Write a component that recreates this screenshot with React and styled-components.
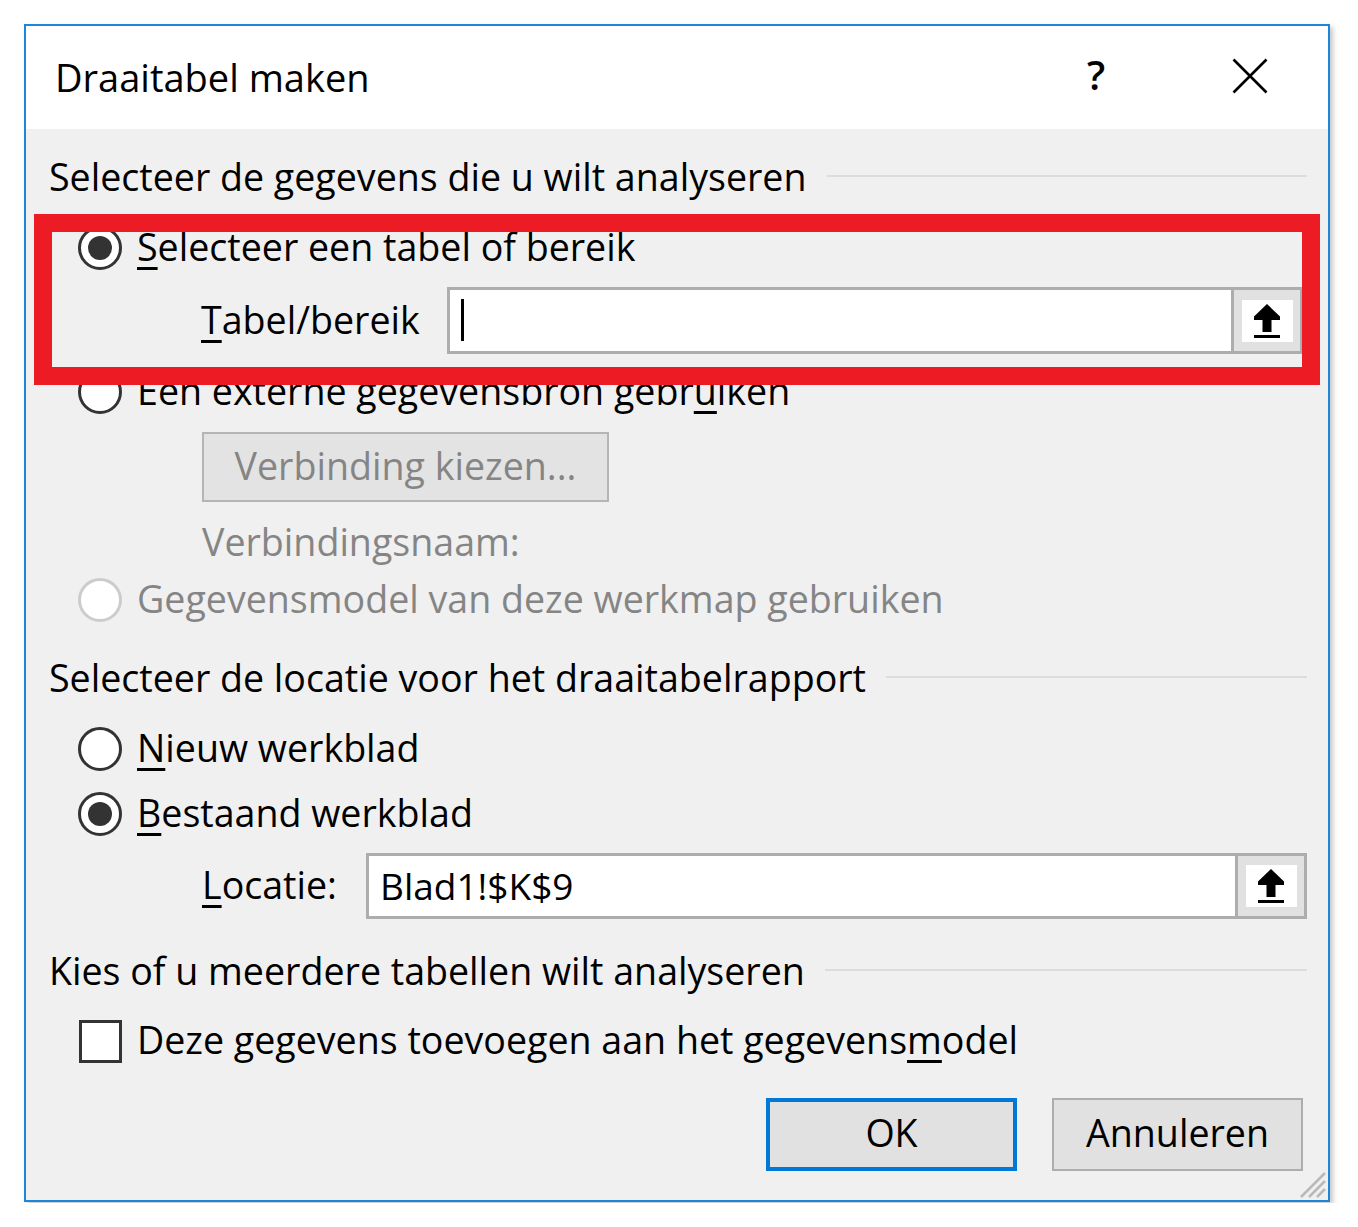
import React from 'react';
import styled, { createGlobalStyle } from 'styled-components';

const GlobalStyle = createGlobalStyle`
  html, body {
    margin: 0;
    padding: 0;
    background: #ffffff;
  }
  body {
    font-family: 'Open Sans', 'Noto Sans', 'DejaVu Sans', sans-serif;
    color: #000;
  }
`;

const Page = styled.div`
  padding: 24px 0 0 24px;
  height: 1203px;
  box-sizing: border-box;
`;

const Dialog = styled.div`
  position: relative;
  width: 1306px;
  height: 1178px;
  box-sizing: border-box;
  border: 2px solid #1e86d9;
  background: #f0f0f0;
  box-shadow: 3px 3px 5px rgba(0, 0, 0, 0.22);
  display: flex;
  flex-direction: column;
`;

const TitleBar = styled.div`
  height: 103px;
  flex-shrink: 0;
  background: #ffffff;
  display: flex;
  align-items: center;
  padding: 0 0 0 29px;
`;

const Title = styled.div`
  flex: 1;
  font-size: 38px;
  padding-bottom: 2px;
`;

const HelpGlyph = styled.div`
  font-size: 40px;
  font-weight: 600;
  width: 40px;
  text-align: center;
  margin-right: 116px;
  padding-bottom: 6px;
`;

const CloseGlyph = styled.svg`
  width: 36px;
  height: 36px;
  margin-right: 60px;
  margin-bottom: 4px;
`;

const Body = styled.div`
  flex: 1;
  padding: 26px 21px 0 23px;
  display: flex;
  flex-direction: column;
`;

const Row = styled.div`
  display: flex;
  align-items: center;
  flex-shrink: 0;
  height: ${p => p.$h || 46}px;
  margin-top: ${p => p.$mt || 0}px;
  padding-left: ${p => p.$indent || 0}px;
  margin-right: ${p => p.$mr || 0}px;
  font-size: 37.6px;
  color: ${p => (p.$disabled ? '#858585' : '#000')};
  white-space: nowrap;
`;

const RowText = styled.span`
  padding-bottom: 3px;
`;

const SectionLine = styled.div`
  flex: 1;
  height: 2px;
  background: #dcdcdc;
  margin-left: 20px;
  margin-top: -4px;
`;

const Radio = styled.span`
  width: 44px;
  height: 44px;
  box-sizing: border-box;
  border-radius: 50%;
  border: 3px solid ${p => (p.$disabled ? '#cccccc' : '#333333')};
  background: #ffffff;
  display: flex;
  align-items: center;
  justify-content: center;
  margin-right: 15px;
  flex-shrink: 0;

  &::after {
    content: '';
    display: ${p => (p.$checked ? 'block' : 'none')};
    width: 24px;
    height: 24px;
    border-radius: 50%;
    background: #333333;
  }
`;

const Check = styled.span`
  width: 43px;
  height: 43px;
  box-sizing: border-box;
  border: 3px solid #333333;
  background: #ffffff;
  margin-right: 15px;
  flex-shrink: 0;
`;

const Acc = styled.span`
  text-decoration: underline;
  text-decoration-thickness: 3px;
  text-underline-offset: 6px;
`;

const FieldLabel = styled.span`
  width: ${p => p.$w}px;
  flex-shrink: 0;
  padding-bottom: 3px;
`;

const FieldGroup = styled.div`
  flex: 1;
  height: 100%;
  box-sizing: border-box;
  border: 3px solid #adadad;
  display: flex;
`;

const Field = styled.div`
  flex: 1;
  background: #ffffff;
  display: flex;
  align-items: center;
  padding-left: 11px;
  padding-bottom: 2px;
  font-size: 37px;
`;

const Caret = styled.span`
  width: 3px;
  height: 42px;
  background: #000;
`;

const PickButton = styled.div`
  width: 66px;
  flex-shrink: 0;
  border-left: 3px solid #adadad;
  background: #e1e1e1;
  display: flex;
  align-items: center;
  justify-content: center;
`;

const PickFace = styled.div`
  width: 51px;
  height: 42px;
  background: #ffffff;
  display: flex;
  align-items: center;
  justify-content: center;
`;

const DisabledButton = styled.div`
  width: 407px;
  height: 100%;
  box-sizing: border-box;
  border: 2px solid #b5b5b5;
  background: #e3e3e3;
  color: #858585;
  display: flex;
  align-items: center;
  justify-content: center;
  padding-bottom: 3px;
`;

const Footer = styled.div`
  display: flex;
  justify-content: flex-end;
  gap: 35px;
  margin-top: 34px;
  margin-right: 4px;
`;

const DialogButton = styled.div`
  width: 251px;
  height: 73px;
  box-sizing: border-box;
  border: ${p => (p.$primary ? '4px solid #0078d7' : '2px solid #adadad')};
  background: #e1e1e1;
  font-size: 37.6px;
  display: flex;
  align-items: center;
  justify-content: center;
  padding-bottom: 4px;
`;

const Highlight = styled.div`
  position: absolute;
  left: 8px;
  top: 188px;
  width: 1286px;
  height: 171px;
  box-sizing: border-box;
  border: 18px solid #ed1c24;
  pointer-events: none;
`;

const Grip = styled.svg`
  position: absolute;
  right: 1px;
  bottom: 1px;
  width: 32px;
  height: 32px;
`;

const UploadIcon = () => (
  <svg width="28" height="36" viewBox="0 0 28 36">
    <path d="M14 1 L27 13.5 L27 17 L18.5 17 L18.5 29 L9.5 29 L9.5 17 L1 17 L1 13.5 Z" fill="#000" />
    <rect x="1" y="32" width="26" height="3" fill="#000" />
  </svg>
);

const RangePicker = ({ children }) => (
  <FieldGroup>
    <Field>{children}</Field>
    <PickButton>
      <PickFace>
        <UploadIcon />
      </PickFace>
    </PickButton>
  </FieldGroup>
);

const SectionHeader = ({ children, mt }) => (
  <Row $mt={mt}>
    <RowText>{children}</RowText>
    <SectionLine />
  </Row>
);

export default function App() {
  return (
    <Page>
      <GlobalStyle />
      <Dialog>
        <TitleBar>
          <Title>Draaitabel maken</Title>
          <HelpGlyph>?</HelpGlyph>
          <CloseGlyph viewBox="0 0 36 36">
            <path d="M1.5 1.5 L34.5 34.5 M34.5 1.5 L1.5 34.5" stroke="#000" strokeWidth="2.6" />
          </CloseGlyph>
        </TitleBar>

        <Body>
          <SectionHeader>Selecteer de gegevens die u wilt analyseren</SectionHeader>

          <Row $mt={24} $indent={29}>
            <Radio $checked />
            <RowText><Acc>S</Acc>electeer een tabel of bereik</RowText>
          </Row>
          <Row $mt={16} $h={67} $indent={152} $mr={4}>
            <FieldLabel $w={246}><Acc>T</Acc>abel/bereik</FieldLabel>
            <RangePicker>
              <Caret />
            </RangePicker>
          </Row>

          <Row $mt={15} $indent={29}>
            <Radio />
            <RowText>Een externe gegevensbron gebr<Acc>u</Acc>iken</RowText>
          </Row>
          <Row $mt={17} $h={70} $indent={153} $disabled>
            <DisabledButton>Verbinding kiezen...</DisabledButton>
          </Row>
          <Row $mt={18} $indent={153} $disabled>
            <RowText>Verbindingsnaam:</RowText>
          </Row>
          <Row $mt={11} $indent={29} $disabled>
            <Radio $disabled />
            <RowText>Gegevensmodel van deze werkmap gebruiken</RowText>
          </Row>

          <SectionHeader mt={33}>Selecteer de locatie voor het draaitabelrapport</SectionHeader>

          <Row $mt={24} $indent={29}>
            <Radio />
            <RowText><Acc>N</Acc>ieuw werkblad</RowText>
          </Row>
          <Row $mt={19} $indent={29}>
            <Radio $checked />
            <RowText><Acc>B</Acc>estaand werkblad</RowText>
          </Row>
          <Row $mt={16} $h={66} $indent={153}>
            <FieldLabel $w={164}><Acc>L</Acc>ocatie:</FieldLabel>
            <RangePicker>Blad1!$K$9</RangePicker>
          </Row>

          <SectionHeader mt={30}>Kies of u meerdere tabellen wilt analyseren</SectionHeader>

          <Row $mt={23} $indent={30}>
            <Check />
            <RowText>Deze gegevens toevoegen aan het gegevens<Acc>m</Acc>odel</RowText>
          </Row>

          <Footer>
            <DialogButton $primary>OK</DialogButton>
            <DialogButton>Annuleren</DialogButton>
          </Footer>
        </Body>

        <Highlight />
        <Grip viewBox="0 0 32 32">
          <path d="M30 6 L6 30 M30 14 L14 30 M30 22 L22 30" stroke="#b9b9b9" strokeWidth="2.5" />
        </Grip>
      </Dialog>
    </Page>
  );
}
